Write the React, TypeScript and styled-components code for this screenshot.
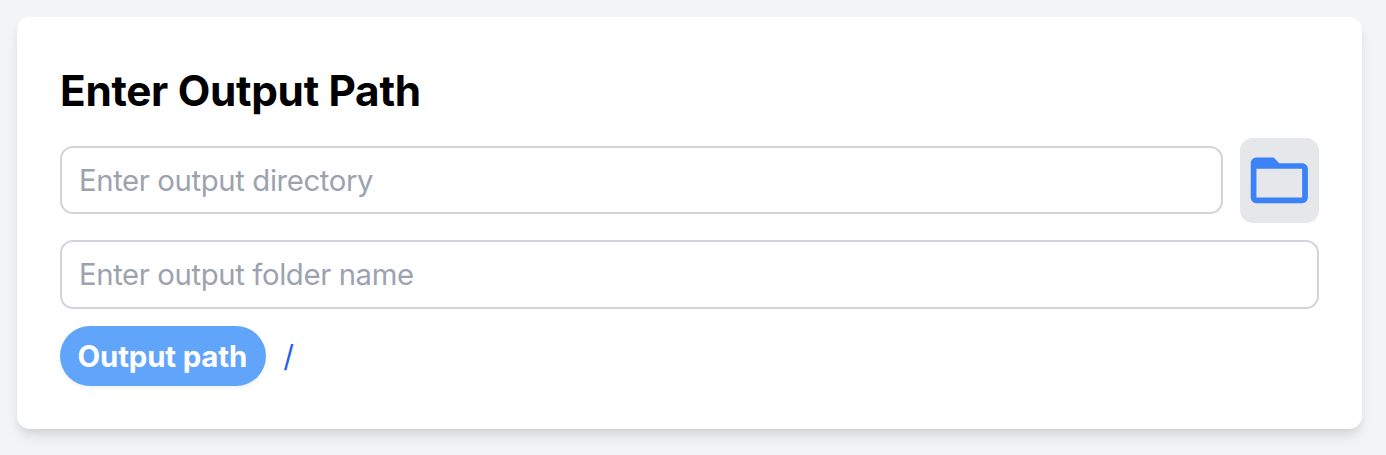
import React from "react";
import styled, { createGlobalStyle } from "styled-components";

const GlobalStyle = createGlobalStyle`
  *, *::before, *::after { box-sizing: border-box; }
  body { margin: 0; background: #f3f4f6; font-family: Inter, sans-serif; }
`;

const Page = styled.main`
  height: 455px;
  padding: 17px 24px 25px 17px;
  overflow: hidden;
`;

const Card = styled.section`
  display: flex;
  flex-direction: column;
  height: 412.4px;
  padding: 44px 43px 43px;
  background: #fff;
  border-radius: 13px;
  box-shadow: 0 8.6px 13px -2px rgba(0, 0, 0, 0.1), 0 4.3px 8.6px -4.3px rgba(0, 0, 0, 0.1);
`;

const Title = styled.h2`
  margin: 0 0 16.5px;
  font-size: 42.3px;
  line-height: 60px;
  font-weight: 700;
  letter-spacing: -0.3px;
  color: #000;
`;

const DirectoryRow = styled.div`
  display: flex;
  align-items: center;
  gap: 17px;
  margin-bottom: 17px;
`;

const PathInput = styled.input`
  flex: 1 0 auto;
  width: 0;
  height: 68px;
  padding: 0 17px;
  border: 2px solid #d1d5db;
  border-radius: 13px;
  background: #fff;
  font: 400 29.3px/44px Inter, sans-serif;
  letter-spacing: -0.37px;
  color: #111827;
  &::placeholder { color: #9ca3af; opacity: 1; }
`;

const FolderInput = styled(PathInput)`
  flex: none;
  width: 100%;
  height: 68.5px;
`;

const BrowseButton = styled.button`
  display: flex;
  align-items: center;
  justify-content: center;
  width: 79px;
  height: 85.5px;
  padding: 0;
  border: 0;
  border-radius: 13px;
  background: #e5e7eb;
  color: #3b82f6;
`;

const Summary = styled.div`
  display: flex;
  align-items: center;
  gap: 17px;
  margin-top: 17.5px;
`;

const Badge = styled.span`
  height: 60px;
  padding: 1px 19px 0 17.5px;
  border-radius: 30px;
  background: #60a5fa;
  color: #fff;
  font-size: 29.4px;
  font-weight: 700;
  letter-spacing: -0.15px;
  line-height: 59px;
  box-shadow: 0 2px 4px rgba(0, 0, 0, 0.06);
`;

const PathText = styled.span`
  font-size: 30px;
  line-height: 60px;
  color: #2563eb;
`;

export default function App() {
  return (
    <Page>
      <GlobalStyle />
      <Card>
        <Title>Enter Output Path</Title>
        <DirectoryRow>
          <PathInput placeholder="Enter output directory" />
          <BrowseButton aria-label="Choose folder">
            <svg width="68.6" height="68.6" viewBox="0 0 24 24" fill="currentColor">
              <path d="M20 6h-8l-2-2H4c-1.1 0-1.99.9-1.99 2L2 18c0 1.1.9 2 2 2h16c1.1 0 2-.9 2-2V8c0-1.1-.9-2-2-2zm0 12H4V8h16v10z" />
            </svg>
          </BrowseButton>
        </DirectoryRow>
        <FolderInput placeholder="Enter output folder name" />
        <Summary>
          <Badge>Output path</Badge>
          <PathText>/</PathText>
        </Summary>
      </Card>
    </Page>
  );
}
